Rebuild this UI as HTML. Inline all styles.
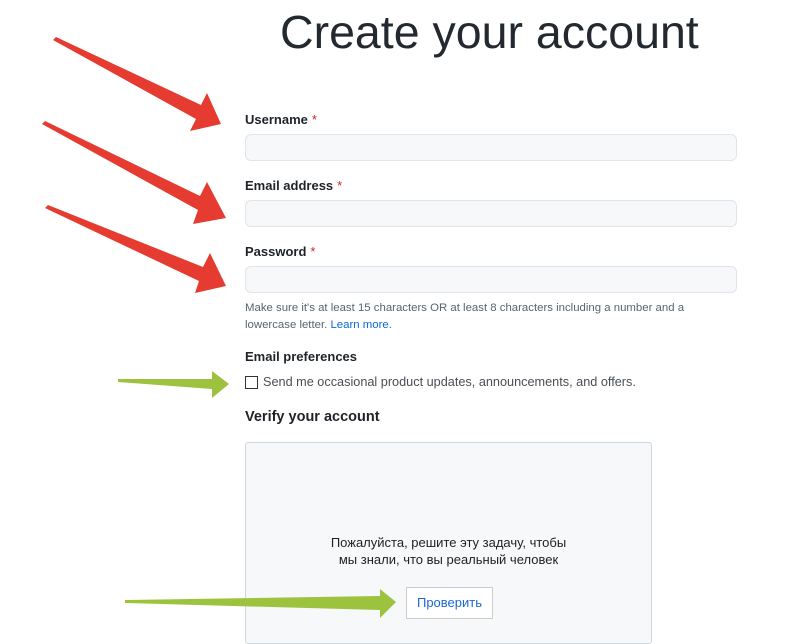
<!DOCTYPE html>
<html><head><meta charset="utf-8"><style>
body{margin:0;width:800px;height:632px;overflow:hidden;background:#fff;font-family:"Liberation Sans",Arial,sans-serif;color:#1f2328;position:relative}
.a{position:absolute}
h1{position:absolute;left:280px;top:0;margin:0;font-weight:400;font-size:46.5px;line-height:64px;color:#24292f;white-space:nowrap}
.lbl{position:absolute;left:245px;font-size:13px;font-weight:700;color:#1f2328}
.lbl span{color:#cf222e;font-weight:400;margin-left:4px}
.in{position:absolute;left:245px;width:490px;height:25px;border:1px solid #e1e4e8;border-radius:6px;background:#f6f8fa}
.help{position:absolute;left:245px;top:300px;font-size:11.4px;line-height:17px;color:#59636e;width:480px}
.help a{color:#0969da;text-decoration:none}
.box{position:absolute;left:245px;top:442px;width:405px;height:200px;border:1px solid #d0d7de;border-radius:3px;background:#f6f8fa}
</style></head><body>
<h1>Create your account</h1>
<div class="lbl" style="top:112px">Username<span>*</span></div>
<div class="in" style="top:134px"></div>
<div class="lbl" style="top:178px">Email address<span>*</span></div>
<div class="in" style="top:200px"></div>
<div class="lbl" style="top:244px">Password<span>*</span></div>
<div class="in" style="top:266px"></div>
<div class="help">Make sure it's at least 15 characters OR at least 8 characters including a number and a lowercase letter. <a>Learn more.</a></div>
<div class="lbl" style="top:349px;font-size:13px">Email preferences</div>
<div class="a" style="left:245px;top:376px;width:11px;height:11px;border:1px solid #333;background:#fff"></div>
<div class="a" style="left:263px;top:375px;font-size:12.7px;color:#4a4f55">Send me occasional product updates, announcements, and offers.</div>
<div class="lbl" style="top:409px;font-size:14.5px">Verify your account</div>
<div class="box"></div>
<div class="a" style="left:245px;width:407px;top:534px;text-align:center;font-size:13px;line-height:17px;color:#222">Пожалуйста, решите эту задачу, чтобы<br>мы знали, что вы реальный человек</div>
<div class="a" style="left:406px;top:587px;width:85px;height:30px;border:1px solid #ccc;background:#fff;color:#1a66d8;font-size:13px;line-height:30px;text-align:center">Проверить</div>
<svg class="a" style="left:0;top:0" width="800" height="632">
<g fill="#e53b30">
<polygon points="53,40 56,37 201,105 207,93 221,124 190,131 196,119"/>
<polygon points="42,124 45,121 200,196 207,182 226,218 193,224 198,210"/>
<polygon points="45,208 48,205 203,267 210,253 226,286 195,293 199,281"/>
</g>
<g fill="#9cc23e">
<polygon points="118,379 118,382 212,389 212,398 229,384 212,371 212,379"/>
<polygon points="125,600 125,603 380,610 380,618 396,602 380,589 380,596"/>
</g>
</svg>
</body></html>
